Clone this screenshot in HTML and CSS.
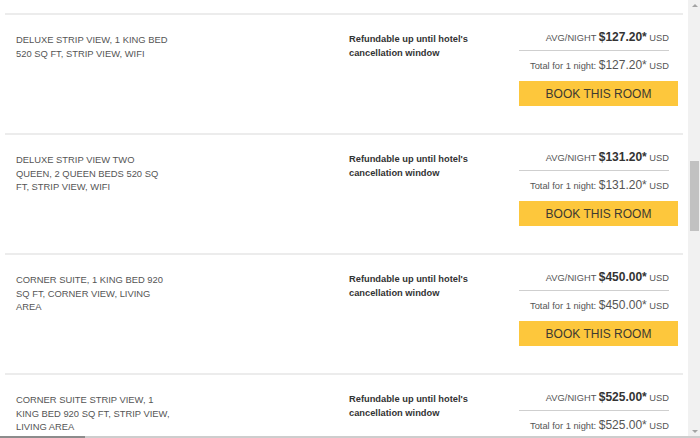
FILE: index.html
```html
<!DOCTYPE html>
<html>
<head>
<meta charset="utf-8">
<link rel="stylesheet" href="styles.css">
</head>
<body>
<div class="screen">
  <div class="main">
    <div class="content">
      <div class="list">
        <div class="row">
          <div class="name">DELUXE STRIP VIEW, 1 KING BED 520 SQ FT, STRIP VIEW, WIFI</div>
          <div class="refund">Refundable up until hotel's cancellation window</div>
          <div class="price">
            <div class="avg">AVG/NIGHT <b class="amt">$127.20*</b> USD</div>
            <div class="total">Total for 1 night: <span class="amt">$127.20*</span> USD</div>
            <button class="book">BOOK THIS ROOM</button>
          </div>
        </div>
        <div class="row">
          <div class="name">DELUXE STRIP VIEW TWO QUEEN, 2 QUEEN BEDS 520 SQ FT, STRIP VIEW, WIFI</div>
          <div class="refund">Refundable up until hotel's cancellation window</div>
          <div class="price">
            <div class="avg">AVG/NIGHT <b class="amt">$131.20*</b> USD</div>
            <div class="total">Total for 1 night: <span class="amt">$131.20*</span> USD</div>
            <button class="book">BOOK THIS ROOM</button>
          </div>
        </div>
        <div class="row">
          <div class="name">CORNER SUITE, 1 KING BED 920 SQ FT, CORNER VIEW, LIVING AREA</div>
          <div class="refund">Refundable up until hotel's cancellation window</div>
          <div class="price">
            <div class="avg">AVG/NIGHT <b class="amt">$450.00*</b> USD</div>
            <div class="total">Total for 1 night: <span class="amt">$450.00*</span> USD</div>
            <button class="book">BOOK THIS ROOM</button>
          </div>
        </div>
        <div class="row">
          <div class="name">CORNER SUITE STRIP VIEW, 1 KING BED 920 SQ FT, STRIP VIEW, LIVING AREA</div>
          <div class="refund">Refundable up until hotel's cancellation window</div>
          <div class="price">
            <div class="avg">AVG/NIGHT <b class="amt">$525.00*</b> USD</div>
            <div class="total">Total for 1 night: <span class="amt">$525.00*</span> USD</div>
            <button class="book">BOOK THIS ROOM</button>
          </div>
        </div>
      </div>
    </div>
    <div class="vscroll">
      <div class="arrow-up"></div>
      <div class="track"><div class="thumb"></div></div>
      <div class="arrow-down"></div>
    </div>
  </div>
  <div class="hbar"><div class="hthumb"></div></div>
</div>
</body>
</html>
```

FILE: styles.css
```css
* { box-sizing: border-box; }
html, body { margin: 0; padding: 0; background: #fff; }
body {
  font-family: "Liberation Sans", Arial, sans-serif;
  width: 700px;
  height: 438px;
  overflow: hidden;
}
.screen { display: flex; flex-direction: column; width: 700px; height: 438px; }
.main { display: flex; flex: 1; min-height: 0; overflow: hidden; }
.content { flex: 1; min-width: 0; overflow: hidden; }
.list { margin: 0 5px 0 5px; padding-top: 13px; }
.row {
  display: grid;
  grid-template-columns: 1fr 170px 159px;
  height: 120px;
  border-top: 2px solid #ececec;
  padding: 0 5px 0 11px;
}
.name {
  padding-top: 18px;
  max-width: 154px;
  font-size: 9.4px;
  line-height: 13.7px;
  color: #555;
}
.refund {
  padding-top: 18px;
  max-width: 140px;
  font-size: 9.3px;
  line-height: 13.7px;
  font-weight: bold;
  color: #333;
}
.price { padding-top: 15px; display: flex; flex-direction: column; }
.avg, .total {
  margin-right: 9px;
  text-align: right;
  font-size: 9.3px;
  line-height: 16px;
  height: 16px;
  color: #555;
  white-space: nowrap;
}
.avg { height: 21px; border-bottom: 1px solid #cfcfcf; padding-bottom: 5px; }
.avg .amt { font-size: 12px; line-height: 10px; color: #333; }
.total { margin-top: 7px; }
.total .amt { font-size: 12px; line-height: 10px; color: #555; }
.book {
  margin-top: 7px;
  height: 25px;
  border: 0;
  background: #fdc73c;
  color: #3d3a32;
  font-family: "Liberation Sans", Arial, sans-serif;
  font-size: 12px;
  padding: 0;
  cursor: pointer;
}
.vscroll {
  width: 12px;
  background: #f1f1f1;
  display: flex;
  flex-direction: column;
  align-items: center;
}
.arrow-up, .arrow-down {
  width: 0; height: 0;
  border-left: 3px solid transparent;
  border-right: 3px solid transparent;
  margin-left: 1px;
}
.arrow-up { border-bottom: 3px solid #a3a3a3; margin-top: 4px; }
.arrow-down { border-top: 3px solid #a3a3a3; margin-bottom: 3px; }
.track { flex: 1; width: 100%; padding-top: 154px; display: flex; justify-content: center; }
.thumb { width: 9px; height: 70px; background: #c1c1c1; margin-left: 1px; }
.hbar { height: 2px; background: #cdcdcd; display: flex; }
.hthumb { width: 85px; background: #8c8c8c; }
```
